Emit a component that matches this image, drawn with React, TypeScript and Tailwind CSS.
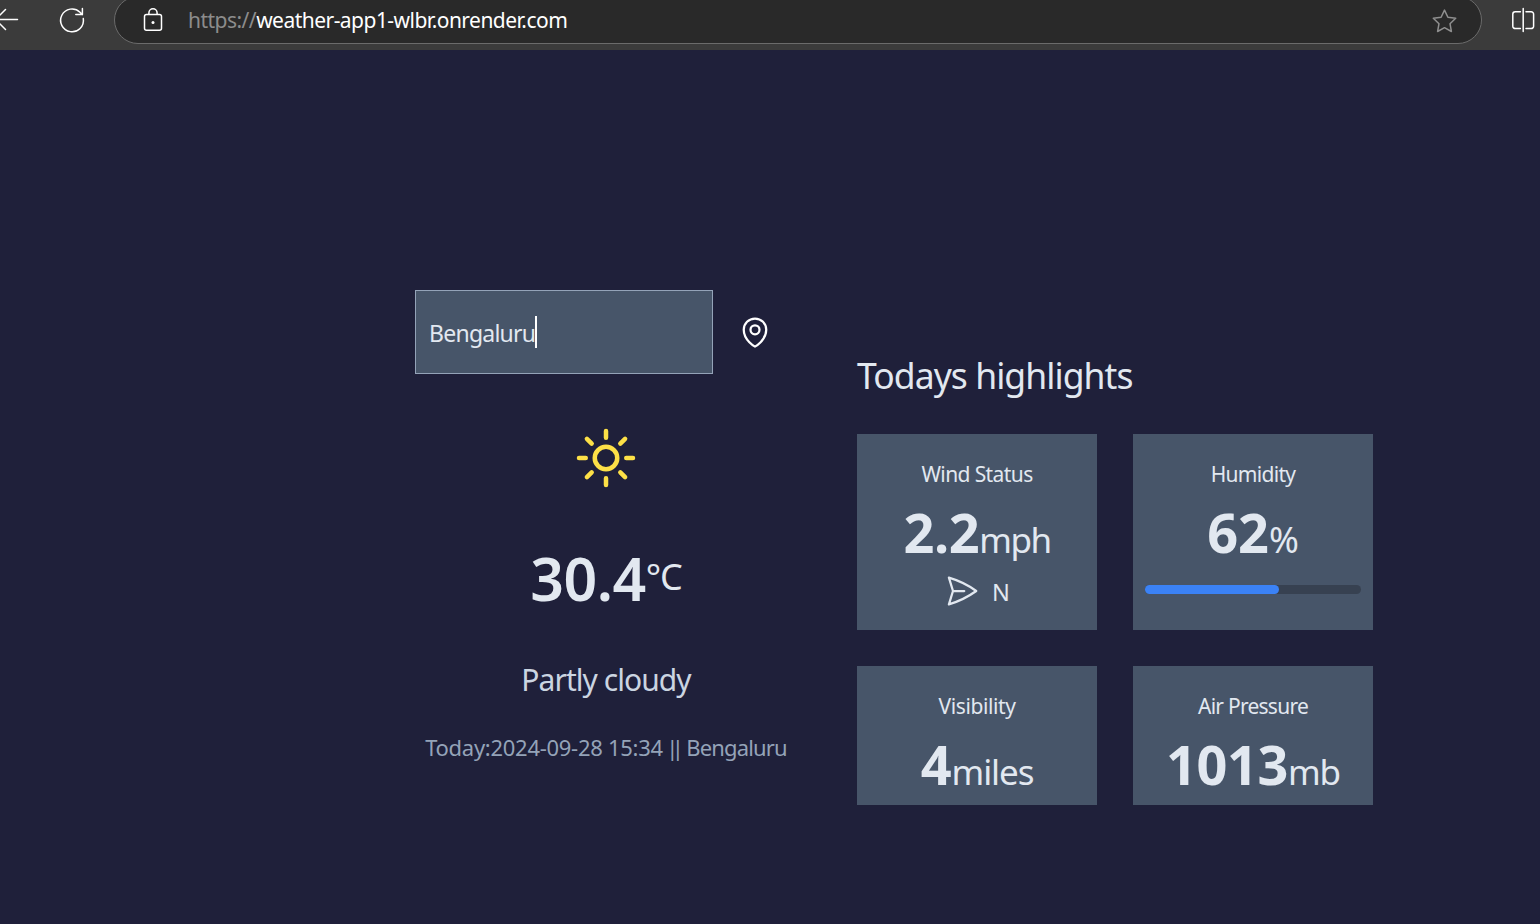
import type { ReactNode } from "react";

function StrokeIcon({ d, className, strokeWidth = 1.5 }: { d: string[]; className: string; strokeWidth?: number }) {
  return (
    <svg
      className={className}
      viewBox="0 0 24 24"
      fill="none"
      stroke="currentColor"
      strokeWidth={strokeWidth}
      strokeLinecap="round"
      strokeLinejoin="round"
    >
      {d.map((p) => (
        <path key={p} d={p} />
      ))}
    </svg>
  );
}

const SUN = [
  "M12 3v2.25m6.364.386-1.591 1.591M21 12h-2.25m-.386 6.364-1.591-1.591M12 18.75V21m-4.773-4.227-1.591 1.591M5.25 12H3m4.227-4.773L5.636 5.636M15.75 12a3.75 3.75 0 1 1-7.5 0 3.75 3.75 0 0 1 7.5 0Z",
];
const PIN = [
  "M15 10.5a3 3 0 1 1-6 0 3 3 0 0 1 6 0Z",
  "M19.5 10.5c0 7.142-7.5 11.25-7.5 11.25S4.5 17.642 4.5 10.5a7.5 7.5 0 1 1 15 0Z",
];
const PLANE = [
  "M6 12 3.269 3.125A59.769 59.769 0 0 1 21.485 12 59.768 59.768 0 0 1 3.27 20.875L5.999 12Zm0 0h7.5",
];

function BrowserBar() {
  return (
    <header className="flex h-[50px] items-start overflow-hidden bg-[#3b3b3b] text-white">
      <svg className="h-10 w-[114px] shrink-0" viewBox="0 0 114 40" fill="none" stroke="currentColor" strokeWidth="1.5" strokeLinecap="round" strokeLinejoin="round">
        <path d="M17.5 19.5H-4M5.5 9.5l-10 10 10 10" />
        <path d="M83.3 18.6a11.4 11.4 0 1 1-3.3-6.4l2.2 2.4M82.4 8.6v6h-6.600" />
      </svg>
      <div className="-mt-1 flex h-12 w-[1368px] shrink-0 items-center rounded-full border border-[#6b6b6b] bg-[#292929] pl-[27px] pr-[24px]">
        <svg className="h-6 w-[22px]" viewBox="0 0 22 24" fill="none" stroke="currentColor" strokeWidth="1.5">
          <rect x="2.5" y="6.5" width="17" height="15.8" rx="2" />
          <path d="M6.9 6.5V4.9a4.1 4.1 0 0 1 8.2 0v1.6" />
          <circle cx="11" cy="14.5" r="1.5" fill="currentColor" stroke="none" />
        </svg>
        <div className="ml-[24px] flex-1 whitespace-nowrap pt-px text-[21px] leading-none tracking-[-0.53px]">
          <span className="text-[#8c8c8c]">https://</span>
          <span>weather-app1-wlbr.onrender.com</span>
        </div>
        <svg className="mt-[2px] h-[26px] w-[26px] text-[#8f8f8f]" viewBox="0 0 26 26" fill="none" stroke="currentColor" strokeWidth="1.5" strokeLinejoin="round">
          <path d="M13.5 2.1l3.4 7.1 7.8 1.1-5.7 5.4 1.4 7.8-6.9-3.8-6.9 3.8L8 15.7 2.3 10.3l7.8-1.1z" />
        </svg>
      </div>
      <svg className="ml-[29px] h-10 w-[29px] shrink-0" viewBox="0 0 29 40" fill="none" stroke="currentColor" strokeWidth="1.5" strokeLinecap="round">
        <path d="M9.4 11.8H4.2a2.4 2.4 0 0 0-2.4 2.4v12a2.4 2.4 0 0 0 2.4 2.4h5.2M15 11.8h5.2a2.4 2.4 0 0 1 2.4 2.4v12a2.4 2.4 0 0 1-2.4 2.4H15M12.2 8.5v23" />
      </svg>
    </header>
  );
}

function Card({ label, value, unit, tall, labelClass, valueClass, unitClass, children }: {
  label: string;
  value: string;
  unit: string;
  tall?: boolean;
  labelClass: string;
  valueClass: string;
  unitClass: string;
  children?: ReactNode;
}) {
  return (
    <section className={`flex flex-col items-center bg-[#475569] px-3 pt-6 ${tall ? "h-[196px]" : "h-[139px]"}`}>
      <h3 className={`text-[21px] leading-[32px] ${labelClass}`}>{label}</h3>
      <p className="mt-[6px] h-[73px] whitespace-nowrap leading-[72px]">
        <span className={`font-bold ${valueClass}`}>{value}</span>
        <span className={unitClass}>{unit}</span>
      </p>
      {children}
    </section>
  );
}

export default function App() {
  return (
    <div className="flex h-[924px] w-[1540px] flex-col overflow-hidden bg-[#1f203a] font-['Noto_Sans',sans-serif] text-[#e2e8f0]">
      <BrowserBar />
      <main className="flex flex-1 pl-[415px] pt-[240px]">
        <div className="flex w-[382px] shrink-0 flex-col items-center">
          <div className="flex w-full items-center">
            <div className="flex h-[84px] w-[298px] items-center border border-[#94a3b8] bg-[#475569] pl-[13px]">
              <span className="pt-[2px] text-[23px] leading-8 tracking-[-0.75px]">Bengaluru</span>
              <span className="h-8 w-[2px] bg-white" />
            </div>
            <StrokeIcon d={PIN} className="ml-6 h-9 w-9 text-white" />
          </div>
          <StrokeIcon d={SUN} className="mt-12 h-[72px] w-[72px] text-[#fde047]" />
          <div className="mt-[48px] flex h-[73px] items-start whitespace-nowrap">
            <span className="text-[59px] font-semibold leading-[72px] tracking-[-0.5px]">30.4</span>
            <span className="text-[36px] leading-[70px] tracking-[-1px]">°C</span>
          </div>
          <p className="mt-[43px] text-[30px] leading-[44px] tracking-[-0.95px] text-[#cbd5e1]">Partly cloudy</p>
          <p className="mt-[28px] whitespace-nowrap text-[22px] leading-[34px] text-[#94a3b8]">
            <span className="tracking-[-0.28px]">Today:2024-09-28 15:34 </span>
            <span className="-ml-[2px] tracking-[-6.5px]">||</span>
            <span className="ml-[4px] tracking-[-0.85px]"> Bengaluru</span>
          </p>
        </div>
        <div className="ml-[60px] w-[516px] shrink-0 pt-[60px]">
          <h2 className="h-[54px] whitespace-nowrap text-[35.5px] leading-[51px] tracking-[-0.95px]">Todays highlights</h2>
          <div className="mt-[30px] grid grid-cols-2 gap-9">
            <Card label="Wind Status" value="2.2" unit="mph" tall labelClass="tracking-[-0.6px]" valueClass="text-[54px] tracking-[-0.4px]" unitClass="text-[35px] tracking-[-1.5px]">
              <div className="mt-1 flex h-9 items-center gap-3">
                <StrokeIcon d={PLANE} className="h-9 w-9" />
                <span className="pt-[2px] text-[23.5px] leading-9">N</span>
              </div>
            </Card>
            <Card label="Humidity" value="62" unit="%" tall labelClass="tracking-[-0.7px]" valueClass="text-[54px]" unitClass="text-[36px]">
              <div className="mt-4 h-[9px] w-full rounded-full bg-[#374151]">
                <div className="h-full rounded-full bg-[#3b82f6]" style={{ width: "62%" }} />
              </div>
            </Card>
            <Card label="Visibility" value="4" unit="miles" labelClass="tracking-[-0.4px]" valueClass="text-[54px]" unitClass="text-[35px] tracking-[-1.1px]" />
            <Card label="Air Pressure" value="1013" unit="mb" labelClass="tracking-[-0.75px]" valueClass="text-[54px] tracking-[-0.4px]" unitClass="text-[35px] tracking-[-1.2px]" />
          </div>
        </div>
      </main>
    </div>
  );
}
